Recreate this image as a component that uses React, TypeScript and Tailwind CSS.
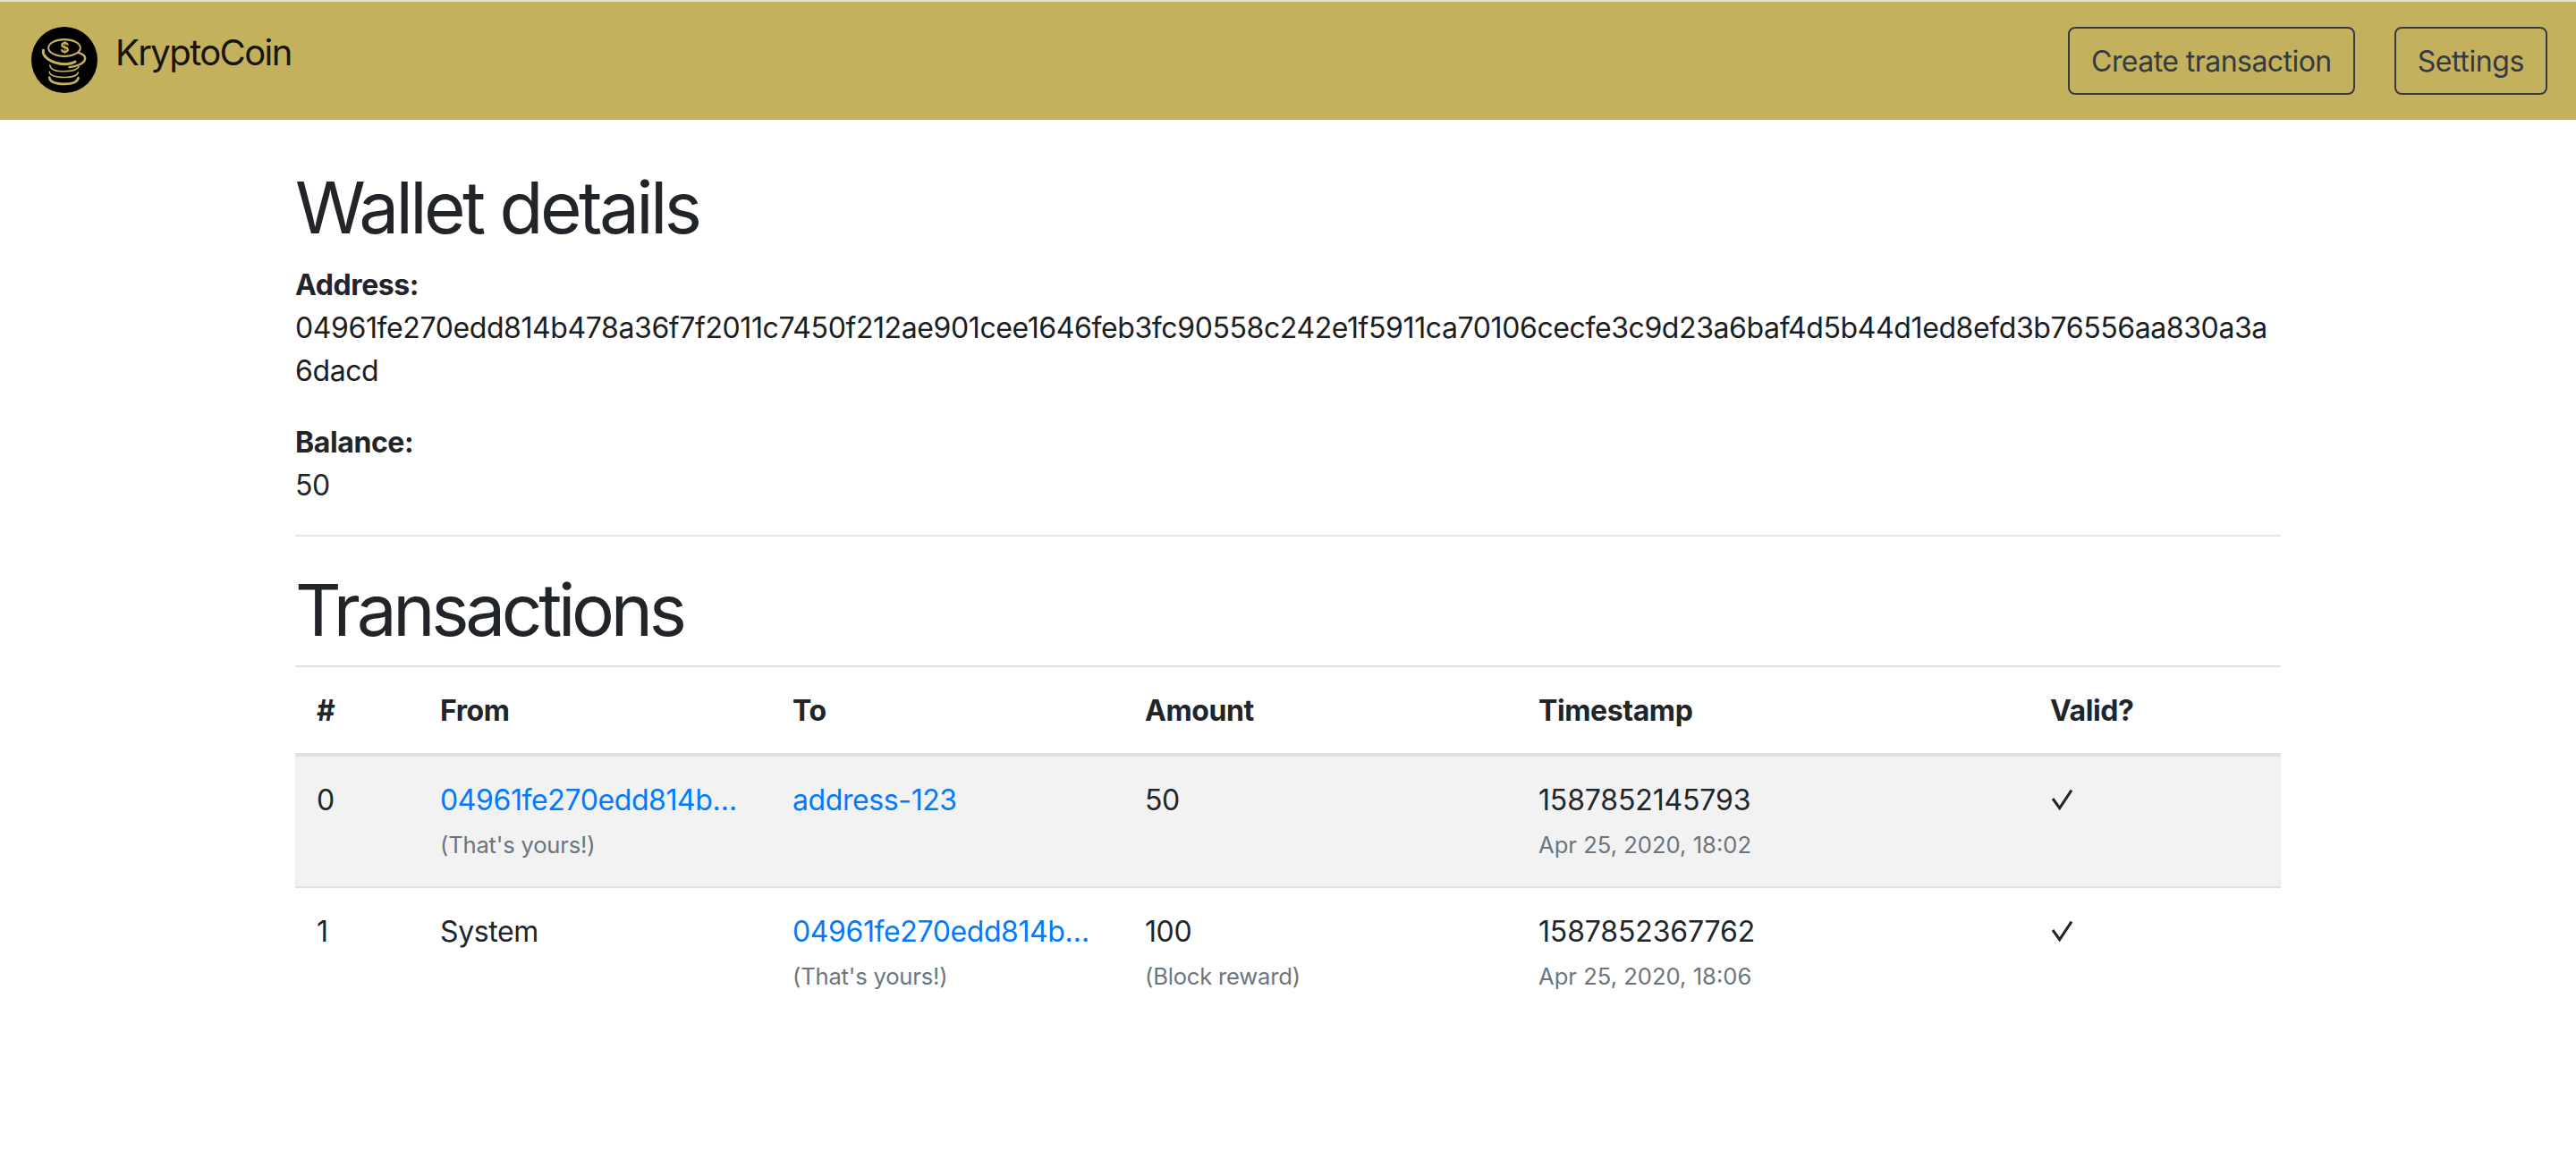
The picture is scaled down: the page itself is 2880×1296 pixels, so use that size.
const address =
  '04961fe270edd814b478a36f7f2011c7450f212ae901cee1646feb3fc90558c242e1f5911ca70106cecfe3c9d23a6baf4d5b44d1ed8efd3b76556aa830a3a6dacd'

const shortAddress = address.slice(0, 17) + '…'

const transactions = [
  {
    id: 0,
    from: shortAddress,
    fromNote: "(That's yours!)",
    to: 'address-123',
    toNote: '',
    amount: '50',
    amountNote: '',
    timestamp: '1587852145793',
    date: 'Apr 25, 2020, 18:02',
  },
  {
    id: 1,
    from: 'System',
    fromNote: '',
    to: shortAddress,
    toNote: "(That's yours!)",
    amount: '100',
    amountNote: '(Block reward)',
    timestamp: '1587852367762',
    date: 'Apr 25, 2020, 18:06',
  },
]

function Logo() {
  return (
    <svg viewBox="30 30 220 220" className="w-[74px] h-[74px] shrink-0">
      <circle cx="140" cy="140" r="110" fill="#000" />
      <g fill="none" stroke="#c4b15e" strokeLinecap="round">
        <ellipse cx="140" cy="100" rx="53" ry="28" strokeWidth="6" />
        <path d="M70 108c-5 22 28 44 70 46 14 0 26-2 36-8" strokeWidth="9" />
        <path d="M186 116c16 4 26 12 22 24-5 12-26 22-52 24" strokeWidth="7" />
        <path d="M92 158c2 14 22 20 48 20 24 0 42-4 48-16" strokeWidth="5" />
        <path d="M90 180c2 12 22 18 50 18 24 0 42-5 46-16" strokeWidth="5" />
        <path d="M90 198c2 16 22 22 50 22 24 0 44-6 46-20" strokeWidth="8" />
      </g>
      <text
        x="140"
        y="116"
        textAnchor="middle"
        fill="#c4b15e"
        fontSize="46"
        fontWeight="700"
        fontFamily="Inter, sans-serif"
      >
        $
      </text>
    </svg>
  )
}

function Check() {
  return (
    <svg viewBox="0 0 27 24" className="block w-[27px] h-[24px] mt-[11px]">
      <path d="M3 11l7.7 10.7L24 1.7" fill="none" stroke="#212529" strokeWidth="3" />
    </svg>
  )
}

function LinkOrText({ value }: { value: string }) {
  if (value === 'System') return <span>{value}</span>
  return (
    <a href="#" className="text-[#007bff]">
      {value}
    </a>
  )
}

function Note({ children }: { children: string }) {
  return (
    <div>
      <small className="text-[25.6px] tracking-[-0.2px] text-[#6c757d]">{children}</small>
    </div>
  )
}

export default function App() {
  return (
    <div className="min-h-[1296px] bg-white font-['Inter',sans-serif] text-[32px] leading-[48px] tracking-[-0.4px] text-[#212529]">
      <nav className="h-[134px] flex items-center justify-between border-t-2 border-[#dedede] bg-[#c4b15e] pl-[35px] pr-[32px]">
        <a href="#" className="flex items-center gap-[20px] -mt-[2px] text-[40px] leading-[60px] tracking-[-1.6px] text-[#171509]">
          <Logo />
          <span className="-mt-[16px]">KryptoCoin</span>
        </a>
        <div className="flex gap-[44px]">
          <button className="h-[76px] px-[24px] pt-[2px] rounded-[8px] border-2 border-[#343a40] tracking-[-0.55px] text-[#343a40]">
            Create transaction
          </button>
          <button className="h-[76px] px-[24px] pt-[2px] rounded-[8px] border-2 border-[#343a40] tracking-[-0.4px] text-[#343a40]">
            Settings
          </button>
        </div>
      </nav>

      <main className="w-[2220px] mx-auto pt-[50px]">
        <h1 className="text-[80px] leading-[96px] font-normal tracking-[-3.6px] mb-[15px]">Wallet details</h1>
        <div className="font-bold">Address:</div>
        <div className="break-all text-[#1b1e21]">{address}</div>
        <div className="mt-[32px] font-bold">Balance:</div>
        <div>50</div>
        <hr className="mt-[31px] mb-[34px] border-t-2 border-[#e5e5e5]" />
        <h1 className="text-[80px] leading-[96px] font-normal tracking-[-4.3px] mb-[14px]">Transactions</h1>

        <table className="w-full table-fixed border-collapse">
          <thead>
            <tr className="border-t-2 border-b-4 border-[#dee2e6] text-left">
              <th className="w-[138px] px-[24px] pt-[25px] pb-[23px] font-bold">#</th>
              <th className="w-[394px] px-[24px] pt-[25px] pb-[23px] font-bold">From</th>
              <th className="w-[394px] px-[24px] pt-[25px] pb-[23px] font-bold">To</th>
              <th className="w-[440px] px-[24px] pt-[25px] pb-[23px] font-bold">Amount</th>
              <th className="w-[572px] px-[24px] pt-[25px] pb-[23px] font-bold">Timestamp</th>
              <th className="w-[282px] px-[24px] pt-[25px] pb-[23px] font-bold">Valid?</th>
            </tr>
          </thead>
          <tbody>
            {transactions.map((tx) => (
              <tr
                key={tx.id}
                className={`align-top ${tx.id === 0 ? 'bg-[#f2f2f2] border-b-2 border-[#dee2e6]' : ''}`}
              >
                <td className="px-[24px] pt-[25px] pb-[22px]">{tx.id}</td>
                <td className="px-[24px] pt-[25px] pb-[22px]">
                  <LinkOrText value={tx.from} />
                  {tx.fromNote && <Note>{tx.fromNote}</Note>}
                </td>
                <td className="px-[24px] pt-[25px] pb-[22px]">
                  <LinkOrText value={tx.to} />
                  {tx.toNote && <Note>{tx.toNote}</Note>}
                </td>
                <td className="px-[24px] pt-[25px] pb-[22px]">
                  {tx.amount}
                  {tx.amountNote && <Note>{tx.amountNote}</Note>}
                </td>
                <td className="px-[24px] pt-[25px] pb-[22px]">
                  <span className="tracking-[-0.15px]">{tx.timestamp}</span>
                  <div>
                    <small className="text-[25.6px] tracking-normal text-[#6c757d]">{tx.date}</small>
                  </div>
                </td>
                <td className="px-[24px] pt-[25px] pb-[22px]">
                  <Check />
                </td>
              </tr>
            ))}
          </tbody>
        </table>
      </main>
    </div>
  )
}
